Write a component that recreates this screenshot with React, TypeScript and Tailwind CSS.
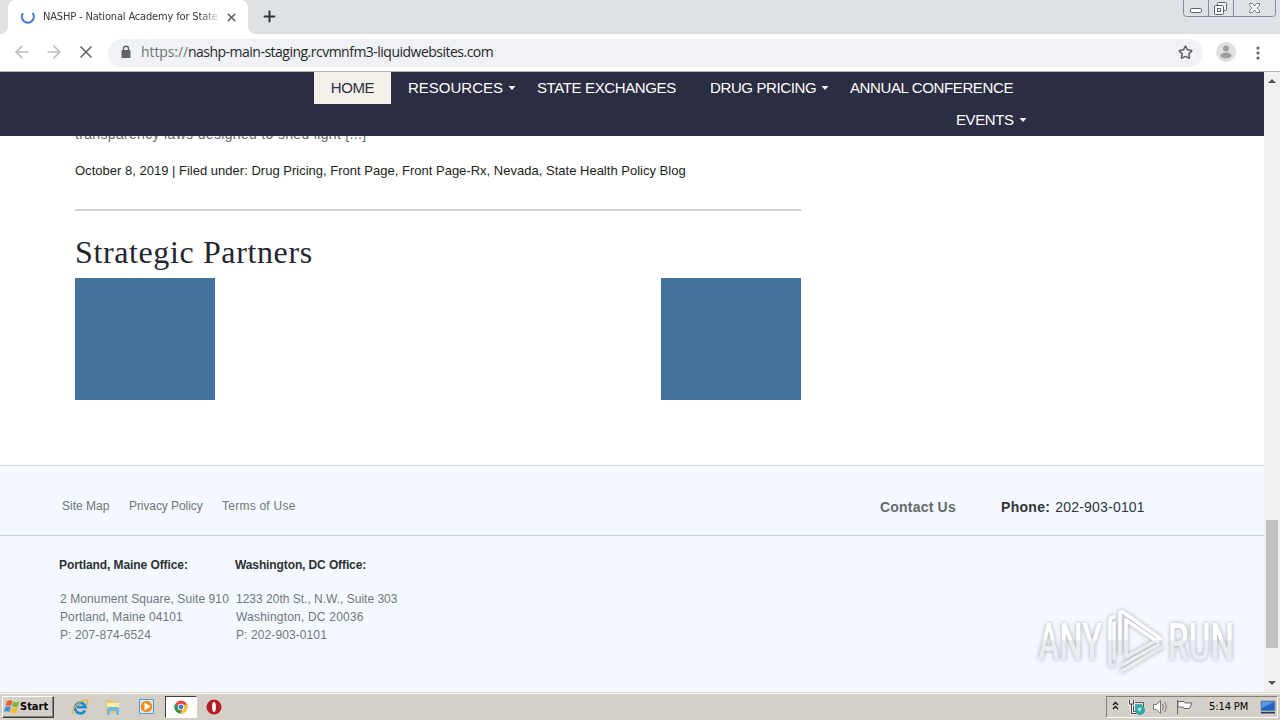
import { Plus, Star, X, ArrowLeft, ArrowRight } from "lucide-react";

function Caret() {
  return (
    <svg width="8" height="4" viewBox="0 0 8 4" className="mb-px shrink-0">
      <path d="M0.500 0h7L4 4z" fill="#fff" />
    </svg>
  );
}

function WindowButtons() {
  return (
    <svg width="94" height="18" viewBox="0 0 94 18" fill="none" className="ml-auto">
      <path d="M0.500 0v13.500q0 3 3 3h86q3 0 3-3V0M25.500 0v16M50.500 0v16" stroke="#868a94" />
      <rect x="7.500" y="8.500" width="11" height="4" rx="1" fill="#fff" stroke="#5b606c" />
      <rect x="34.500" y="2.500" width="9" height="8" rx="1" fill="#f4f5f7" stroke="#5b606c" />
      <rect x="31.500" y="5.500" width="9" height="9" rx="1" fill="#fff" stroke="#5b606c" />
      <rect x="34.500" y="8.500" width="3" height="3" stroke="#5b606c" />
      <path d="M66.500 3.500h3l2 2.500 2-2.500h3v2L74 8l2.500 2.500v2h-3l-2-2.500-2 2.500h-3v-2L69 8l-2.500-2.500z" fill="#fff" stroke="#6b707b" strokeWidth="0.900" />
    </svg>
  );
}

function TabStrip() {
  return (
    <div className="flex h-[34px] bg-[#dee1e6]">
      <div className="flex h-full w-2 items-end overflow-hidden bg-white">
        <div className="h-full w-2 rounded-br-lg bg-[#dee1e6]" />
      </div>
      <div className="flex h-full w-60 items-center rounded-t-lg bg-white pl-3">
        <svg width="16" height="16" viewBox="0 0 16 16" className="mr-[7px] shrink-0">
          <path d="M2.900 4.200A6 6 0 1 0 12.600 4" fill="none" stroke="#3b74d8" strokeWidth="2" />
        </svg>
        <span className="w-[175px] shrink-0 overflow-hidden font-['DejaVu_Sans_Condensed','DejaVu_Sans',sans-serif] text-[11px] tracking-[-0.160px] whitespace-nowrap text-[#35373a] [mask-image:linear-gradient(to_right,#000_157px,transparent_179px)]">
          NASHP - National Academy for State
        </span>
        <X size={13} strokeWidth={3} color="#5f6368" className="ml-[7px] shrink-0" />
      </div>
      <div className="h-full w-2 bg-white">
        <div className="h-full w-2 rounded-bl-lg bg-[#dee1e6]" />
      </div>
      <Plus size={17} strokeWidth={2.8} color="#303338" className="mt-2 ml-[5px]" />
      <WindowButtons />
      <div className="w-[3px]" />
    </div>
  );
}

function Toolbar() {
  return (
    <div className="flex h-[38px] items-center border-b border-[#b4b4b8] bg-white">
      <ArrowLeft size={20} strokeWidth={2} color="#bcbdbf" className="mb-0.5 ml-3" />
      <ArrowRight size={20} strokeWidth={2} color="#bcbdbf" className="mb-0.5 ml-3" />
      <X size={20} strokeWidth={2} color="#5f6368" className="mb-0.5 ml-3" />
      <div className="ml-3 flex h-7 w-[1095px] items-center rounded-full bg-[#f0f2f5] pr-2.5 pl-3">
        <svg width="12" height="14" viewBox="0 0 12 14" className="mb-0.5">
          <path d="M3.500 6V3.700a2.500 2.500 0 0 1 5 0V6" fill="none" stroke="#5f6368" strokeWidth="1.400" />
          <rect x="1.500" y="5" width="9" height="8" rx="1" fill="#5f6368" />
        </svg>
        <span className="mb-0.5 ml-[9px] font-['Open_Sans',sans-serif] text-[14px] tracking-[-0.510px] whitespace-nowrap text-[#24272b]">
          <span className="tracking-[-0.100px] text-[#6e7277]">https://</span>nashp-main-staging.rcvmnfm3-liquidwebsites.com
        </span>
        <Star size={15} strokeWidth={2.5} color="#5f6368" className="ml-auto" />
      </div>
      <svg width="20" height="20" viewBox="0 0 20 20" className="mb-0.5 ml-[13px]">
        <circle cx="10" cy="10" r="10" fill="#dfe0e1" />
        <circle cx="10" cy="6.500" r="3" fill="#9d9fa1" />
        <ellipse cx="10" cy="13.500" rx="5.500" ry="3" fill="#9d9fa1" />
      </svg>
      <svg width="4" height="14" viewBox="0 0 4 14" fill="#5f6368" className="ml-5">
        <circle cx="2" cy="2" r="1.600" />
        <circle cx="2" cy="7" r="1.600" />
        <circle cx="2" cy="12" r="1.600" />
      </svg>
    </div>
  );
}

function SiteNav() {
  return (
    <nav className="h-16 shrink-0 bg-[#2b2d42] text-[15px] tracking-[-0.380px] text-white">
      <div className="flex h-8 pl-[314px] leading-8 whitespace-nowrap">
        <a className="w-[77px] bg-[#f6f0ea] text-center text-[#2b2d42]">HOME</a>
        <a className="ml-[17px] flex w-[129px] items-center gap-[5px] tracking-normal">RESOURCES<Caret /></a>
        <a className="w-[173px]">STATE EXCHANGES</a>
        <a className="flex w-[140px] items-center gap-[5px]">DRUG PRICING<Caret /></a>
        <a>ANNUAL CONFERENCE</a>
      </div>
      <div className="flex h-8 items-center gap-[5px] pl-[956px] leading-8">EVENTS<Caret /></div>
    </nav>
  );
}

function Watermark() {
  return (
    <svg width="210" height="76" viewBox="0 0 210 76" className="absolute top-[137px] left-[1030px] overflow-visible drop-shadow-[0_0_2px_rgba(90,95,100,0.500)]">
      <defs>
        <linearGradient id="fade" gradientUnits="userSpaceOnUse" x1="0" y1="0" x2="0" y2="76">
          <stop offset="0.480" stopColor="#fff" />
          <stop offset="0.500" stopColor="#e9edf1" />
        </linearGradient>
      </defs>
      <g fill="url(#fade)" className="font-[Roboto,sans-serif] text-[51px] font-medium">
        <text x="8" y="57" textLength="64" lengthAdjust="spacingAndGlyphs">ANY</text>
        <text x="138" y="57" textLength="66" lengthAdjust="spacingAndGlyphs">RUN</text>
      </g>
      <g fill="none" stroke="url(#fade)" strokeWidth="3.500" strokeLinejoin="round" strokeLinecap="round">
        <path d="M131 36L93 9q-3-1-3 2v38" />
        <path d="M128 39L96 17v37l33-18" />
        <path d="M84 14q-4 0-4 4v42q0 4 4 2M84 20v36M92 68l40-24M92 62l36-20" />
      </g>
    </svg>
  );
}

function SiteFooter() {
  return (
    <footer className="relative h-[227px] border-t border-[#c9d6de] bg-[#f4f9ff] text-xs text-[#71767a]">
      <div className="flex h-[70px] items-center border-b border-[#c5d2da] pt-[11px] whitespace-nowrap">
        <a className="ml-[62px] w-[67px]">Site Map</a>
        <a className="w-[93px] tracking-[-0.080px]">Privacy Policy</a>
        <a className="w-[658px] tracking-[0.240px]">Terms of Use</a>
        <a className="mt-0.5 w-[121px] text-[14px] font-bold tracking-[0.200px] text-[#666a6d]">Contact Us</a>
        <div className="mt-0.5 flex gap-[5px] text-sm tracking-[0.200px] text-[#303438]">
          <b className="tracking-[0.300px]">Phone:</b>
          <span>202-903-0101</span>
        </div>
      </div>
      <div className="flex pt-5 pl-[59px] leading-[18px] tracking-[0.100px] whitespace-nowrap">
        <div className="w-44">
          <b className="block tracking-[-0.080px] text-[#2d3134]">Portland, Maine Office:</b>
          <p className="mt-4 pl-px">2 Monument Square, Suite 910</p>
          <p className="pl-px">Portland, Maine 04101</p>
          <p className="pl-px">P: 207-874-6524</p>
        </div>
        <div>
          <b className="block tracking-[-0.110px] text-[#2d3134]">Washington, DC Office:</b>
          <p className="mt-4 pl-px tracking-normal">1233 20th St., N.W., Suite 303</p>
          <p className="pl-px tracking-[0.200px]">Washington, DC 20036</p>
          <p className="pl-px">P: 202-903-0101</p>
        </div>
      </div>
      <Watermark />
    </footer>
  );
}

function Scrollbar() {
  return (
    <div className="flex w-4 flex-col items-center bg-[#f1f1f1]">
      <svg width="16" height="17" viewBox="0 0 16 17"><path d="M4 11l4-4 4 4z" fill="#505050" /></svg>
      <div className="mt-[431px] h-32 w-3 bg-[#c1c1c1]" />
      <svg width="16" height="17" viewBox="0 0 16 17" className="mt-auto"><path d="M4 6l4 4 4-4z" fill="#505050" /></svg>
    </div>
  );
}

function QuickLaunch() {
  return (
    <>
      <svg width="18" height="18" viewBox="0 0 18 18" fill="none" className="ml-[17px]">
        <path d="M14 12.500a5.300 5.300 0 1 1 .5-3.300H6" stroke="#258bd3" strokeWidth="2.800" />
        <path d="M2 16C-1 12 10 1 16 2c2 1 0 4-1 5" stroke="#e5b52e" strokeWidth="1.300" />
      </svg>
      <svg width="18" height="18" viewBox="0 0 18 18" className="ml-[15px]">
        <path d="M2 2h5l1 2h7v11H2z" fill="#e8c768" />
        <path d="M3 5h12v6H3z" fill="#f9edaa" />
        <path d="M3 17v-6q0-2 2-2h8q2 0 2 2v6h-3v-4H6v4z" fill="#71b7df" />
      </svg>
      <svg width="18" height="18" viewBox="0 0 18 18" className="ml-4">
        <path d="M1.500 1.500h14v14h-14z" fill="#d8ecfa" stroke="#4f9bd2" />
        <circle cx="8.500" cy="8.500" r="5.800" fill="#f38b18" />
        <path d="M6.500 4.500l6 4-6 4z" fill="#fff" />
      </svg>
      <div className="ml-[9px] flex h-[22px] w-8 items-center justify-center border border-t-[#404040] border-r-white border-b-white border-l-[#404040] bg-white">
        <svg width="14" height="14" viewBox="0 0 14 14">
          <circle cx="7" cy="7" r="6.500" fill="#e44b3e" />
          <path d="M1.300 3.700L5 9l2 4.500A6.500 6.500 0 0 1 1.300 3.700z" fill="#2c9e55" />
          <path d="M13.100 4.800H7L9.200 8 6.500 13.500A6.500 6.500 0 0 0 13.100 4.800z" fill="#f5c938" />
          <circle cx="7" cy="7" r="3.200" fill="#fff" />
          <circle cx="7" cy="7" r="2.400" fill="#3b7de0" />
        </svg>
      </div>
      <svg width="16" height="16" viewBox="0 0 16 16" className="ml-[9px]">
        <circle cx="8" cy="8" r="7.500" fill="#b81c22" />
        <ellipse cx="8" cy="8" rx="1.900" ry="5" fill="#fff" />
      </svg>
    </>
  );
}

function Tray() {
  return (
    <div className="mr-0.5 ml-auto flex h-[22px] w-[172px] items-center border border-t-[#808080] border-r-white border-b-white border-l-[#808080]">
      <svg width="7" height="9" viewBox="0 0 7 9" fill="none" stroke="#111" strokeWidth="1.300" className="mb-[3px] ml-[5px]">
        <path d="M1 4l2.500-2.500L6 4M1 8l2.500-2.500L6 8" />
      </svg>
      <svg width="18" height="17" viewBox="0 0 18 17" className="ml-[9px]">
        <path d="M5.500 3.500h10v9h-10z" fill="#e3eef0" stroke="#555" />
        <path d="M7 5h7v5H7z" fill="#5ba6b0" />
        <path d="M1.500 1v4h4V1M3.500 5v9.500h5" fill="none" stroke="#fff" strokeWidth="3" />
        <path d="M1.500 1v4h4V1M3.500 5v9.500h5" fill="none" stroke="#444" strokeWidth="1.200" />
        <circle cx="12" cy="11" r="5" fill="#31a4a4" />
        <path d="M9 10q3-3 5-1l-2 4z" fill="#a1e1dc" />
      </svg>
      <svg width="18" height="16" viewBox="0 0 18 16" fill="none" stroke="#777" className="ml-[6px]">
        <path d="M1.500 5.500h3l4-4v13l-4-4h-3z" fill="#fff" />
        <path d="M10.500 5q2 3 0 6M12.500 3q3.500 5 0 10" />
      </svg>
      <svg width="18" height="16" viewBox="0 0 18 16" fill="#fff" stroke="#666" className="ml-[6px]">
        <path d="M1.500 1v14.500M2 2.500h6l1 1.500h7l-2.500 5.500H8L7 8H2z" />
      </svg>
      <span className="ml-[15px] w-[51px] pt-px font-['DejaVu_Sans_Condensed','DejaVu_Sans',sans-serif] text-[11px] tracking-[-0.100px] whitespace-nowrap text-black">
        5:14 PM
      </span>
      <svg width="16" height="14" viewBox="0 0 16 14" className="shrink-0">
        <path d="M1 1h14v10H1z" fill="#2464c3" stroke="#8495ae" />
        <path d="M2 2h12L2 8z" fill="#5797e3" />
        <path d="M1 12h14v1.500H1z" fill="#27395a" />
      </svg>
    </div>
  );
}

function Taskbar() {
  return (
    <div className="flex h-7 shrink-0 items-center border-t border-[#d4d0c8] bg-[#d4d0c8] pt-px shadow-[inset_0_1px_0_#fff]">
      <button className="ml-0.5 flex h-[22px] w-[52px] items-center border border-t-white border-r-[#404040] border-b-[#404040] border-l-white pl-px shadow-[inset_-1px_-1px_0_#808080]">
        <svg width="16" height="16" viewBox="0 0 16 16" className="shrink-0">
          <path d="M3 2q3-1.500 5.500 0L7 7Q4.500 5.500 1.500 7z" fill="#e8602c" />
          <path d="M9.500 2.500q3 1.500 6 0L14 7.500q-3 1.500-6 0z" fill="#7fb73b" />
          <path d="M1.300 8q3-1.500 5.500 0l-1.500 5Q3 11.500 0 13z" fill="#3e8edb" />
          <path d="M7.600 8.500q3 1.500 6 0l-1.500 5q-3 1.500-6 0z" fill="#f3bc31" />
        </svg>
        <span className="pt-px font-['DejaVu_Sans_Condensed','DejaVu_Sans',sans-serif] text-[11px] font-bold text-black">Start</span>
      </button>
      <QuickLaunch />
      <Tray />
    </div>
  );
}

export default function App() {
  return (
    <div className="flex h-[720px] w-[1280px] flex-col overflow-hidden bg-white font-['Liberation_Sans',Arial,sans-serif]">
      <TabStrip />
      <Toolbar />
      <div className="flex h-[620px]">
        <div className="flex w-[1264px] flex-col">
          <SiteNav />
          <main className="flex h-[329px] w-[801px] flex-col pl-[75px] whitespace-nowrap">
            {/* last line of the post excerpt, scrolled under the nav */}
            <div className="flex h-3 items-end overflow-hidden text-sm leading-[28px] tracking-[0.330px] text-[#666a70]">
              transparency laws designed to shed light [...]
            </div>
            <p className="mt-3 text-[13px] leading-[22px] tracking-[0.010px] text-[#1d1d22]">
              October 8, 2019 | Filed under: Drug Pricing, Front Page, Front Page-Rx, Nevada, State Health Policy Blog
            </p>
            <hr className="mt-[27px] border-t-2 border-[#d2d3d5]" />
            <h2 className="mt-[21px] font-['Liberation_Serif',serif] text-[32px] leading-10 tracking-[0.620px] text-[#24252f]">Strategic Partners</h2>
            <div className="mt-[6px] flex justify-between">
              <div className="h-[122px] w-[140px] bg-[#42729e]" />
              <div className="h-[122px] w-[140px] bg-[#42729e]" />
            </div>
          </main>
          <SiteFooter />
        </div>
        <Scrollbar />
      </div>
      <Taskbar />
    </div>
  );
}
